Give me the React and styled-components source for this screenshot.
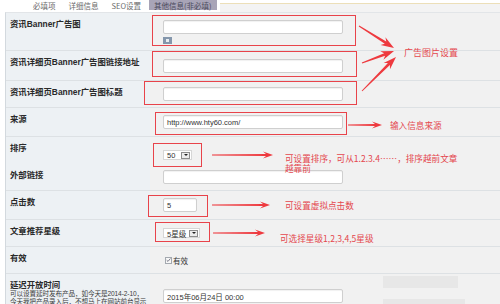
import React from 'react';
import styled, { createGlobalStyle } from 'styled-components';

const GlobalStyle = createGlobalStyle`
    html, body {
        margin: 0;
        padding: 0;
        background: #ffffff;
    }
    body {
        width: 500px;
        height: 304px;
        overflow: hidden;
        font-family: 'Liberation Sans', 'Noto Sans CJK SC', sans-serif;
        color: #222;
    }
`;

// tapered arrow polygon, computed from two points
const arrowPoints = (x1, y1, x2, y2, tail = 0.5, neck = 1.4, head = 4.5, headLen = 10) => {
    const len = Math.hypot(x2 - x1, y2 - y1);
    const ux = (x2 - x1) / len;
    const uy = (y2 - y1) / len;
    const nx = -uy;
    const ny = ux;
    const bx = x2 - ux * headLen;
    const by = y2 - uy * headLen;
    const cx = x2 - ux * (headLen + 3);
    const cy = y2 - uy * (headLen + 3);
    const pts = [
        [x1 + nx * tail, y1 + ny * tail],
        [bx + nx * neck, by + ny * neck],
        [cx + nx * head, cy + ny * head],
        [x2, y2],
        [cx - nx * head, cy - ny * head],
        [bx - nx * neck, by - ny * neck],
        [x1 - nx * tail, y1 - ny * tail],
    ];
    return pts.map((p) => p.map((v) => v.toFixed(2)).join(',')).join(' ');
};

const App = () => {
    return (
        <Page>
            <GlobalStyle />
            <TabBar>
                <Tab>必填项</Tab>
                <Tab>详细信息</Tab>
                <Tab>SEO设置</Tab>
                <Tab $active>其他信息(非必填)</Tab>
                <TabFill />
            </TabBar>

            <Form>
                <Row $h={38}>
                    <Label>资讯Banner广告图</Label>
                    <Value>
                        <Highlight $t={5} $l={11} $r={13} $b={2}>
                            <FieldStack>
                                <TextInput $w={180} />
                                <UploadIcon />
                            </FieldStack>
                        </Highlight>
                    </Value>
                </Row>

                <Row $h={30}>
                    <Label>资讯详细页Banner广告图链接地址</Label>
                    <Value>
                        <Highlight $t={8} $l={11} $r={14} $b={4}>
                            <TextInput $w={180} />
                        </Highlight>
                    </Value>
                </Row>

                <Row $h={27}>
                    <Label>资讯详细页Banner广告图标题</Label>
                    <Value>
                        <Highlight $t={6} $l={19} $r={14} $b={4}>
                            <TextInput $w={180} />
                        </Highlight>
                    </Value>
                </Row>

                <Row $h={29}>
                    <Label>来源</Label>
                    <Value>
                        <Highlight $t={3} $l={8} $r={4} $b={6}>
                            <TextInput $w={180}>http://www.hty60.com/</TextInput>
                        </Highlight>
                        <Arrow $ml={5} $mt={6} w={34} />
                        <Note $ml={8} $mt={6}>输入信息来源</Note>
                    </Value>
                </Row>

                <Row $h={27}>
                    <Label>排序</Label>
                    <Value>
                        <Highlight $t={7} $l={10} $r={10} $b={7}>
                            <Select $w={29}>
                                50
                                <DropButton />
                            </Select>
                        </Highlight>
                        <Arrow $ml={20} w={61} />
                        <Note $ml={12} $mt={16} $w={178}>
                            可设置排序，可从1.2.3.4……，排序越前文章越靠前
                        </Note>
                    </Value>
                </Row>

                <Row $h={27}>
                    <Label>外部链接</Label>
                    <Value>
                        <TextInput $w={180} />
                    </Value>
                </Row>

                <Row $h={29}>
                    <Label>点击数</Label>
                    <Value>
                        <Highlight $t={3} $l={15} $r={11} $b={5}>
                            <TextInput $w={34}>5</TextInput>
                        </Highlight>
                        <Arrow $ml={15} w={58} />
                        <Note $ml={15}>可设置虚拟点击数</Note>
                    </Value>
                </Row>

                <Row $h={27}>
                    <Label>文章推荐星级</Label>
                    <Value>
                        <Highlight $t={6} $l={8} $r={10} $b={4}>
                            <Select $w={37}>
                                5星级
                                <DropButton />
                            </Select>
                        </Highlight>
                        <Arrow $ml={13} w={52} />
                        <Note $ml={15} $mt={10}>可选择星级1,2,3,4,5星级</Note>
                    </Value>
                </Row>

                <Row $h={27}>
                    <Label>有效</Label>
                    <Value>
                        <CheckLabel>
                            <CheckBox>
                                <svg width="6" height="6" viewBox="0 0 6 6">
                                    <path d="M0.8 3.2 L2.4 4.7 L5.3 1.2" fill="none" stroke="#556" strokeWidth="0.9" />
                                </svg>
                            </CheckBox>
                            有效
                        </CheckLabel>
                    </Value>
                </Row>

                <Row $h={40}>
                    <Label>
                        延迟开放时间
                        <Desc>
                            可以设置延时发布产品，如今天是2014-2-10，今天我把产品录入后，不想马上在网站前台显示出来，你就要设置延时发布到2014-3-10，那么
                        </Desc>
                    </Label>
                    <Value $top={15}>
                        <TextInput $w={180}>2015年06月24日 00:00</TextInput>
                        <DateGhost>
                            <GhostBar $w={75} />
                            <GhostBar $w={82} />
                        </DateGhost>
                    </Value>
                </Row>
            </Form>

            <Overlay width="500" height="304" viewBox="0 0 500 304">
                <polygon points={arrowPoints(359, 26, 394, 48)} fill="#ee3a3f" />
                <polygon points={arrowPoints(362, 63, 394, 51)} fill="#ee3a3f" />
                <polygon points={arrowPoints(362, 91, 396, 57)} fill="#ee3a3f" />
            </Overlay>
            <GroupNote>广告图片设置</GroupNote>
        </Page>
    );
};

const Arrow = ({ w, $ml = 0, $mt = 0 }) => (
    <ArrowSvg width={w} height="10" viewBox={`0 0 ${w} 10`} $ml={$ml} $mt={$mt}>
        <polygon points={arrowPoints(0, 5, w, 5, 0.6, 1.1, 3.6, 7)} fill="#ee3a3f" />
    </ArrowSvg>
);

const Page = styled.div`
    position: relative;
    width: 500px;
    height: 304px;
    overflow: hidden;
    background: #ffffff;
`;

const TabBar = styled.div`
    display: flex;
    align-items: stretch;
    height: 12px;
    padding-left: 28px;
    background: #ffffff;
`;

const Tab = styled.div`
    display: flex;
    align-items: center;
    padding: 0 5px;
    margin-right: 3px;
    font-family: 'Noto Sans CJK SC', sans-serif;
    font-size: 7.5px;
    color: ${(p) => (p.$active ? '#4b4a5c' : '#6a6a6a')};
    background: ${(p) => (p.$active ? '#a8a4b7' : 'transparent')};
    height: 10px;
`;

const TabFill = styled.div`
    flex: 1;
    margin-top: 3px;
    border-top: 1px solid #ecdfb8;
    background: #f3f3f3;
`;

const Form = styled.div`
    margin-left: 5px;
    border-left: 1px solid #d3d9de;
    border-top: 1px solid #e2e5e8;
`;

const Row = styled.div`
    display: grid;
    grid-template-columns: 144px 1fr;
    height: ${(p) => p.$h}px;
    box-sizing: border-box;
    border-bottom: 1px solid #dde1e4;
`;

const Label = styled.div`
    background: #edf1f4;
    padding: 6px 3px 0 4px;
    font-family: 'Liberation Sans', 'Noto Sans CJK SC', sans-serif;
    font-size: 8.4px;
    font-weight: 700;
    line-height: 10px;
    color: #2a2a2a;
    overflow: hidden;
`;

const Desc = styled.div`
    font-size: 6.6px;
    font-weight: 400;
    line-height: 7.5px;
    color: #3a3a3a;
    letter-spacing: -0.1px;
`;

const Value = styled.div`
    display: flex;
    align-items: ${(p) => (p.$top ? 'flex-start' : 'center')};
    padding-left: 13px;
    padding-top: ${(p) => p.$top || 0}px;
    background: #f1f1f1;
`;

const Highlight = styled.div`
    position: relative;
    display: flex;

    &::after {
        content: '';
        position: absolute;
        top: -${(p) => p.$t}px;
        left: -${(p) => p.$l}px;
        right: -${(p) => p.$r}px;
        bottom: -${(p) => p.$b}px;
        border: 1.5px solid #e8434a;
        pointer-events: none;
    }
`;

const FieldStack = styled.div`
    display: flex;
    flex-direction: column;
    align-items: flex-start;
    gap: 3px;
`;

const TextInput = styled.div`
    width: ${(p) => p.$w}px;
    height: 14px;
    box-sizing: border-box;
    display: flex;
    align-items: center;
    padding-left: 3px;
    background: #ffffff;
    border: 1px solid #cfcfcf;
    border-radius: 2px;
    box-shadow: inset 0 1px 1px rgba(0, 0, 0, 0.06);
    font-family: 'Liberation Sans', 'Noto Sans CJK SC', sans-serif;
    font-size: 7.5px;
    color: #333;
    white-space: nowrap;
`;

const UploadIcon = styled.div`
    width: 9px;
    height: 7px;
    background: #8597ac;
    position: relative;

    &::after {
        content: '';
        position: absolute;
        left: 3px;
        top: 2px;
        width: 3px;
        height: 3px;
        background: #e8edf2;
    }
`;

const Select = styled.div`
    width: ${(p) => p.$w}px;
    height: 10px;
    box-sizing: border-box;
    display: flex;
    align-items: center;
    justify-content: space-between;
    padding: 0 1px 0 3px;
    background: #ffffff;
    border: 1px solid #d6d6d6;
    font-family: 'Liberation Sans', 'Noto Sans CJK SC', sans-serif;
    font-size: 7.5px;
    color: #333;
    white-space: nowrap;
`;

const DropButton = styled.span`
    width: 9px;
    height: 7px;
    box-sizing: border-box;
    border: 1px solid #8d8d8d;
    background: #ececec;
    display: flex;
    align-items: center;
    justify-content: center;

    &::after {
        content: '';
        border-left: 2px solid transparent;
        border-right: 2px solid transparent;
        border-top: 2px solid #222;
    }
`;

const ArrowSvg = styled.svg`
    flex: none;
    margin-left: ${(p) => p.$ml}px;
    margin-top: ${(p) => p.$mt}px;
`;

const Note = styled.div`
    position: relative;
    z-index: 2;
    margin-left: ${(p) => p.$ml || 0}px;
    margin-top: ${(p) => p.$mt || 0}px;
    width: ${(p) => (p.$w ? `${p.$w}px` : 'auto')};
    font-family: 'Noto Sans CJK SC', sans-serif;
    font-size: 8.6px;
    line-height: 10px;
    color: #e4474e;
    white-space: ${(p) => (p.$w ? 'normal' : 'nowrap')};
`;

const CheckLabel = styled.div`
    display: flex;
    align-items: center;
    gap: 1px;
    margin-left: 2px;
    font-family: 'Noto Sans CJK SC', sans-serif;
    font-size: 7.5px;
    color: #333;
`;

const CheckBox = styled.span`
    width: 7px;
    height: 7px;
    box-sizing: border-box;
    border: 1px solid #a4a9b0;
    background: #f7f7f7;
    display: flex;
    align-items: center;
    justify-content: center;
`;

const DateGhost = styled.div`
    display: flex;
    flex-direction: column;
    gap: 11px;
    margin-left: 40px;
    margin-top: -13px;
`;

const GhostBar = styled.div`
    width: ${(p) => p.$w}px;
    height: 12px;
    background: #e7e7e7;
`;

const Overlay = styled.svg`
    position: absolute;
    top: 0;
    left: 0;
    pointer-events: none;
`;

const GroupNote = styled.div`
    position: absolute;
    left: 404px;
    top: 47px;
    font-family: 'Noto Sans CJK SC', sans-serif;
    font-size: 9px;
    line-height: 12px;
    color: #e4474e;
`;

export default App;
